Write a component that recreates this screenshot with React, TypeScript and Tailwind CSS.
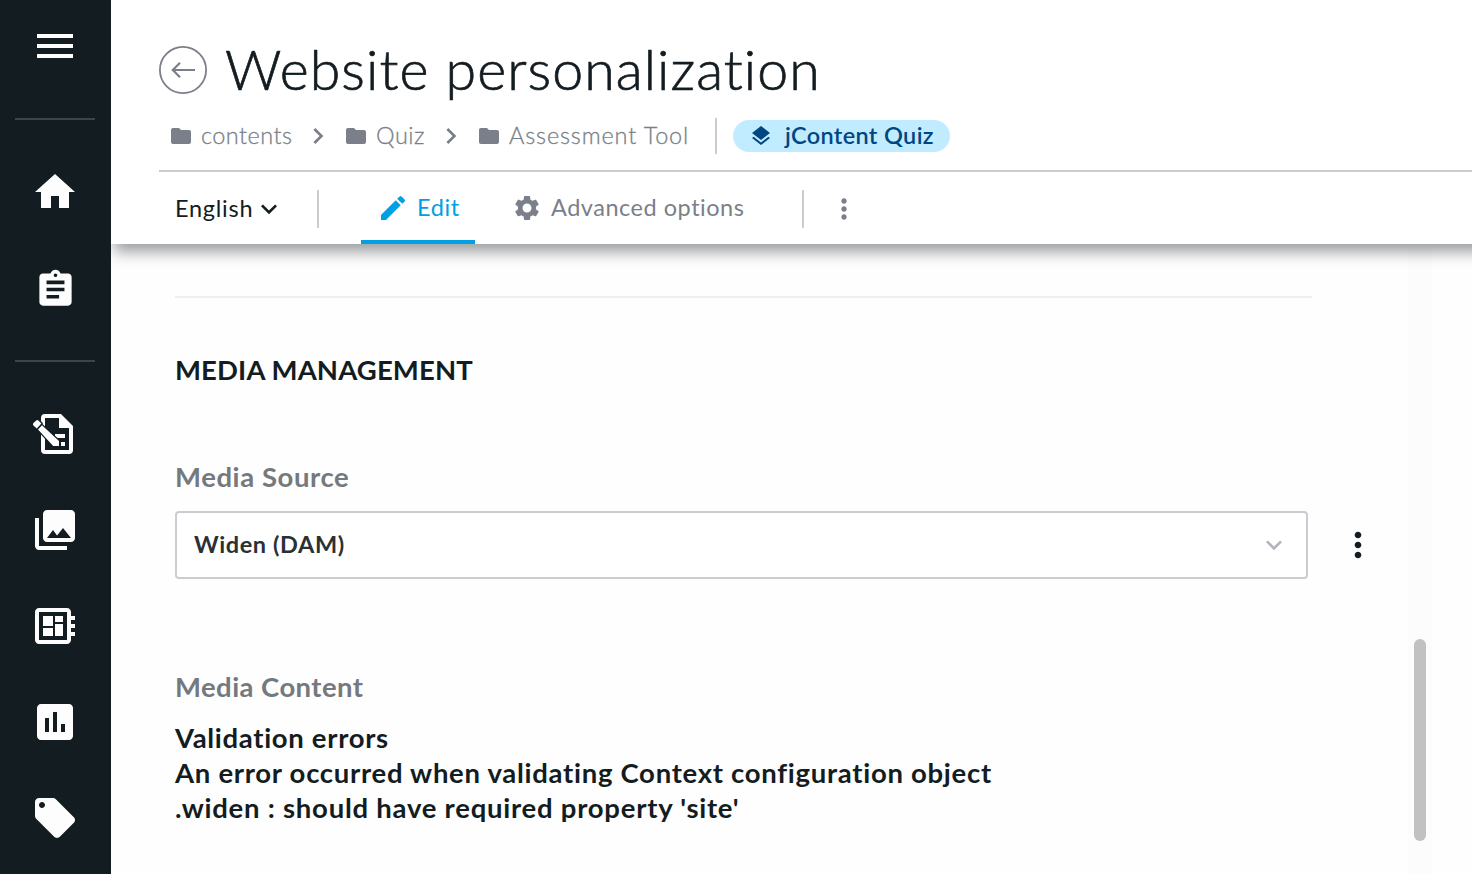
import React from "react";
import {
  MdAssessment,
  MdAssignment,
  MdChevronRight,
  MdDeveloperBoard,
  MdEdit,
  MdFolder,
  MdHome,
  MdKeyboardArrowDown,
  MdLayers,
  MdLocalOffer,
  MdMenu,
  MdMoreVert,
  MdPhotoLibrary,
  MdSettings,
} from "react-icons/md";

function PagesIcon() {
  return (
    <svg width="48" height="48" viewBox="0 0 48 48" fill="currentColor">
      <path
        fillRule="evenodd"
        d="M14 4H30L42 16V40a4 4 0 0 1-4 4H14a4 4 0 0 1-4-4V8a4 4 0 0 1 4-4ZM14 8V40H38V18H28V8Z"
      />
      <path d="M24 24h10v4H24zM30 32h4v4h-4z" />
      <path
        d="M7 19.6L11 15.3L28 31V36H22.2ZM2.4 13L5.2 10.4Q6.2 9.6 7.4 10.4L10.4 13.4L5.8 18.4L2.4 15.5Q1.3 14.2 2.4 13Z"
        stroke="#131c21"
        strokeWidth="2.4"
        paintOrder="stroke"
      />
    </svg>
  );
}

function BackIcon() {
  return (
    <svg width="48" height="48" viewBox="0 0 48 48" fill="none" stroke="#7b7f89" className="shrink-0">
      <circle cx="24" cy="24" r="23.1" strokeWidth="1.8" />
      <path d="M36 24H14M21 16.8L13.8 24L21 31.2" strokeWidth="2.2" />
    </svg>
  );
}

function Crumb({ label, className }: { label: string; className: string }) {
  return (
    <div className={`flex items-center ${className}`}>
      <MdFolder size={24} className="mr-2 shrink-0" />
      <span className="-mt-0.5 text-[23.5px] leading-[33px] font-light [-webkit-text-stroke:0.3px_#7b7f89]">
        {label}
      </span>
    </div>
  );
}

function Sidebar() {
  return (
    <nav className="flex w-[111px] shrink-0 flex-col items-center bg-[#131c21] pt-[22px] pr-px text-[#fdfdfd]">
      <MdMenu size={48} className="shrink-0" />
      <div className="mt-12 h-0.5 w-20 shrink-0 bg-[#3d454c]" />
      <MdHome size={48} className="mt-12 shrink-0" />
      <div className="mt-12 flex h-12 w-12 shrink-0 items-center justify-center pt-0.5">
        <MdAssignment size={43} />
      </div>
      <div className="mt-12 h-0.5 w-20 shrink-0 bg-[#3d454c]" />
      <div className="mt-12 flex flex-col gap-12">
        <PagesIcon />
        <MdPhotoLibrary size={48} />
        <MdDeveloperBoard size={48} />
        <MdAssessment size={48} />
        <MdLocalOffer size={48} />
      </div>
    </nav>
  );
}

function Header() {
  return (
    <header className="relative z-10 -mr-8 flex h-[244px] shrink-0 flex-col bg-white pt-[46px] pl-12 shadow-[0_11px_14px_-3px_rgba(19,28,33,0.42)]">
      <div className="flex h-12 items-center">
        <BackIcon />
        <h1 className="ml-[18px] pb-[3px] text-[55.5px] leading-[56px] font-light tracking-[1.06px] whitespace-nowrap [-webkit-text-stroke:0.7px_#131c21]">
          Website personalization
        </h1>
      </div>
      <div className="mt-6 flex h-9 items-center pl-2.5 whitespace-nowrap text-[#7b7f89]">
        <Crumb label="contents" className="w-[133px] tracking-[0.45px]" />
        <MdChevronRight size={32} className="mr-[10px] shrink-0" />
        <Crumb label="Quiz" className="w-[91px] tracking-[0.5px]" />
        <MdChevronRight size={32} className="mr-[10px] shrink-0" />
        <Crumb label="Assessment Tool" className="w-[238px] tracking-[0.85px]" />
        <div className="h-9 w-0.5 bg-[#cbcbd1]" />
        <div className="ml-4 flex h-8 w-[217px] items-center rounded-full bg-[#c1ecff] pl-4 text-[#004682]">
          <MdLayers size={24} className="mr-3 shrink-0" />
          <span className="-mt-0.5 text-[23.5px] leading-8 font-semibold tracking-[0.35px]">jContent Quiz</span>
        </div>
      </div>
      <div className="mt-4 h-0.5 shrink-0 bg-[#cbcbd1]" />
      <div className="flex h-[72px] items-center pl-4">
        <button className="flex w-[142px] items-center text-left text-[23.5px]">
          <span className="mt-0.5 w-[78px] tracking-[0.75px]">English</span>
          <MdKeyboardArrowDown size={32} className="mt-0.5" />
        </button>
        <div className="mt-0.5 h-[38px] w-0.5 bg-[#cbcbd1]" />
        <button className="ml-[42px] flex h-[72px] w-[114px] items-center border-b-4 border-[#00a0e3] pl-4 text-[23.5px] text-[#00a0e3]">
          <MdEdit size={32} className="mt-1 mr-2" />
          <span className="mt-1 tracking-[0.6px]">Edit</span>
        </button>
        <button className="ml-[37px] flex w-[290px] items-center text-[23.5px] tracking-[0.52px] whitespace-nowrap text-[#7b7f89]">
          <MdSettings size={30} className="mr-[9px]" />
          <span>Advanced options</span>
        </button>
        <div className="mt-0.5 h-[38px] w-0.5 bg-[#cbcbd1]" />
        <MdMoreVert size={32} className="mt-0.5 ml-6 text-[#7b7f89]" />
      </div>
    </header>
  );
}

function Content() {
  return (
    <main className="flex min-h-0 flex-1 bg-[#fefefe]">
      <div className="w-[1297px] pt-[52px] pl-16">
        <div className="h-0.5 w-[1137px] bg-[#efefef]" />
        <h2 className="mt-[54px] text-[27.5px] leading-[36px] font-bold tracking-[0.13px]">MEDIA MANAGEMENT</h2>
        <div className="mt-[71px] text-[27.5px] leading-[36px] font-bold tracking-[0.58px] text-[#75797d]">Media Source</div>
        <div className="mt-4 flex items-center">
          <div className="flex h-[68px] w-[1133px] items-center justify-between rounded-[4px] border-2 border-[#cbcbd1] bg-white pr-4 pl-[17px]">
            <span className="text-[23.5px] font-bold tracking-[0.6px] text-[#293136]">Widen (DAM)</span>
            <MdKeyboardArrowDown size={32} className="text-[#b3b4bd]" />
          </div>
          <MdMoreVert size={40} className="ml-[30px]" />
        </div>
        <div className="mt-[90px] text-[27.5px] leading-[36px] font-bold tracking-[0.43px] text-[#75797d]">Media Content</div>
        <div className="mt-[15px] text-[27.5px] leading-[35px] font-bold whitespace-nowrap">
          <p className="tracking-[0.68px]">Validation errors</p>
          <p className="tracking-[0.71px]">An error occurred when validating Context configuration object</p>
          <p className="tracking-[0.75px]">.widen : should have required property 'site'</p>
        </div>
      </div>
      <div className="w-6 bg-[#fcfcfc] pt-[395px] pl-1.5">
        <div className="h-[202px] w-3 rounded-full bg-[#c1c1c1]" />
      </div>
    </main>
  );
}

export default function App() {
  return (
    <div className="flex h-[874px] w-[1472px] overflow-hidden bg-white font-['Lato',sans-serif] text-[#131c21]">
      <Sidebar />
      <div className="flex min-w-0 flex-1 flex-col overflow-hidden">
        <Header />
        <Content />
      </div>
    </div>
  );
}
